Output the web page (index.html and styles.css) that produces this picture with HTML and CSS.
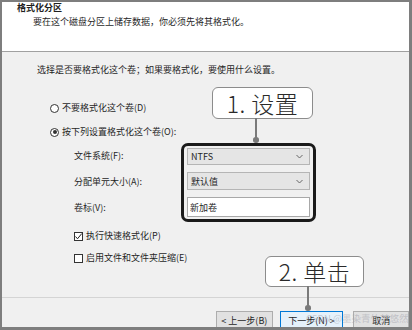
FILE: index.html
```html
<!DOCTYPE html>
<html lang="zh-CN">
<head>
<meta charset="utf-8">
<link rel="stylesheet" href="styles.css">
</head>
<body>
<div class="dialog">
  <header class="head">
    <div class="title">格式化分区</div>
    <div class="sub">要在这个磁盘分区上储存数据，你必须先将其格式化。</div>
  </header>
  <main class="body">
    <p class="intro">选择是否要格式化这个卷；如果要格式化，要使用什么设置。</p>
    <div class="options">
      <div class="radio"><span class="circle"></span>不要格式化这个卷(D)</div>
      <div class="radio"><span class="circle on"></span>按下列设置格式化这个卷(O):</div>
    </div>
    <div class="settings">
      <div class="labels">
        <span class="l1">文件系统(F):</span>
        <span class="l2">分配单元大小(A):</span>
        <span class="l3">卷标(V):</span>
      </div>
      <div class="hl">
        <div class="combo c1">NTFS<svg class="chev" width="7" height="5" viewBox="0 0 7 5"><path d="M0.5 1 L3.5 4 L6.5 1" fill="none" stroke="#666" stroke-width="1"/></svg></div>
        <div class="combo c2">默认值<svg class="chev" width="7" height="5" viewBox="0 0 7 5"><path d="M0.5 1 L3.5 4 L6.5 1" fill="none" stroke="#666" stroke-width="1"/></svg></div>
        <div class="textbox">新加卷</div>
      </div>
    </div>
    <div class="checks">
      <div class="check"><span class="box"><svg width="9" height="9" viewBox="0 0 9 9"><path d="M1.5 4.5 L3.5 6.8 L7.8 1.5" fill="none" stroke="#222" stroke-width="1"/></svg></span>执行快速格式化(P)</div>
      <div class="check"><span class="box"></span>启用文件和文件夹压缩(E)</div>
    </div>
  </main>
  <footer class="foot">
    <div class="btn back">&lt; 上一步(B)</div>
    <div class="btn next">下一步(N) &gt;</div>
    <div class="btn cancel">取消</div>
  </footer>

  <div class="callout co1">1. 设置<span class="stem"></span></div>
  <div class="callout co2">2. 单击<span class="stem"></span></div>
  <div class="watermark">CSDN @墨染青竹梦悠然</div>
</div>
</body>
</html>
```
FILE: styles.css
```css
* { box-sizing: border-box; }
html, body { margin: 0; padding: 0; }
body {
  width: 412px;
  height: 330px;
  overflow: hidden;
  font-family: "Noto Sans CJK SC", "Noto Sans", sans-serif;
  font-size: 9px;
  color: #1f1f1f;
}
.dialog {
  position: relative;
  width: 412px;
  height: 330px;
  border-style: solid;
  border-color: #7e7e7e;
  border-width: 2px 3px 3px 2px;
  background: #f0f0f0;
  overflow: hidden;
}
.head {
  height: 50px;
  background: #fff;
  border-bottom: 1px solid #a0a0a0;
  padding-left: 15px;
}
.title {
  font-weight: bold;
  line-height: 12px;
}
.sub {
  margin-top: 2px;
  padding-left: 16px;
  line-height: 12px;
}
.body {
  height: 245px;
  padding-top: 12px;
}
.intro {
  margin: 0;
  padding-left: 35px;
  line-height: 12px;
}
.options {
  margin-top: 26px;
  padding-left: 48px;
  display: flex;
  flex-direction: column;
  gap: 12px;
}
.radio, .check {
  display: flex;
  align-items: center;
  height: 12px;
  line-height: 12px;
}
.circle {
  width: 9px;
  height: 9px;
  border: 1px solid #333;
  border-radius: 50%;
  background: #fff;
  margin-right: 3px;
  display: flex;
  align-items: center;
  justify-content: center;
}
.circle.on::after {
  content: "";
  width: 4px;
  height: 4px;
  border-radius: 50%;
  background: #333;
}
.settings {
  margin-top: 5px;
  padding-left: 72px;
  display: flex;
}
.labels {
  width: 107px;
  padding-top: 5px;
  display: flex;
  flex-direction: column;
}
.labels span { display: block; }
.l1 { height: 17px; line-height: 15px; }
.l2 { height: 18px; line-height: 20px; margin-top: 7px; }
.l3 { height: 20px; line-height: 22px; margin-top: 7px; }
.hl {
  width: 135px;
  border: 3px solid #1a1a1a;
  border-radius: 7px;
  padding: 2px 3px;
  display: flex;
  flex-direction: column;
  gap: 7px;
}
.combo {
  height: 17px;
  background: #e5e5e5;
  border: 1px solid #b5b5b5;
  display: flex;
  align-items: center;
  justify-content: space-between;
  padding: 0 6px 0 3px;
}
.combo.c2 { height: 18px; }
.chev { display: block; }
.textbox {
  height: 20px;
  background: #fff;
  border: 1px solid #a8a8a8;
  display: flex;
  align-items: center;
  padding-left: 2px;
}
.checks {
  margin-top: 8px;
  padding-left: 72px;
  display: flex;
  flex-direction: column;
  gap: 10px;
}
.box {
  width: 9px;
  height: 9px;
  border: 1px solid #333;
  background: #fff;
  margin-right: 3px;
  position: relative;
}
.box svg {
  position: absolute;
  left: -1px;
  top: -1px;
}
.foot {
  border-top: 1px solid #d4d4d4;
  padding: 13px 0 0 214px;
  display: flex;
}
.btn {
  height: 19px;
  border: 1px solid #adadad;
  background: #e1e1e1;
  display: flex;
  align-items: center;
  justify-content: center;
  line-height: 12px;
}
.back { width: 57px; }
.next {
  width: 64px;
  margin-left: 7px;
  border-color: #0078d7;
  background: #e5f1fb;
}
.cancel { width: 56px; margin-left: 10px; }
.callout {
  position: absolute;
  background: #fff;
  border: 1px solid #8c8c8c;
  border-radius: 6px;
  font-family: "Noto Sans CJK SC", sans-serif;
  font-weight: 300;
  font-size: 23px;
  color: #2a2a2a;
  display: flex;
  align-items: center;
  justify-content: center;
  line-height: 1;
  letter-spacing: 0.5px;
}
.co1 { left: 210px; top: 85px; width: 101px; height: 32px; }
.co2 { left: 263px; top: 254px; width: 99px; height: 31px; }
.stem {
  position: absolute;
  width: 1.5px;
  background: #7a7a7a;
  top: 100%;
}
.stem::after {
  content: "";
  position: absolute;
  left: -2px;
  bottom: -2.5px;
  width: 5.5px;
  height: 5.5px;
  border-radius: 50%;
  background: #7a7a7a;
}
.co1 .stem { left: 42px; height: 22px; }
.co2 .stem { left: 41px; height: 22px; }
.watermark {
  position: absolute;
  left: 304px;
  top: 309px;
  font-size: 9.5px;
  color: rgba(160, 160, 170, 0.5);
  white-space: nowrap;
}
```
